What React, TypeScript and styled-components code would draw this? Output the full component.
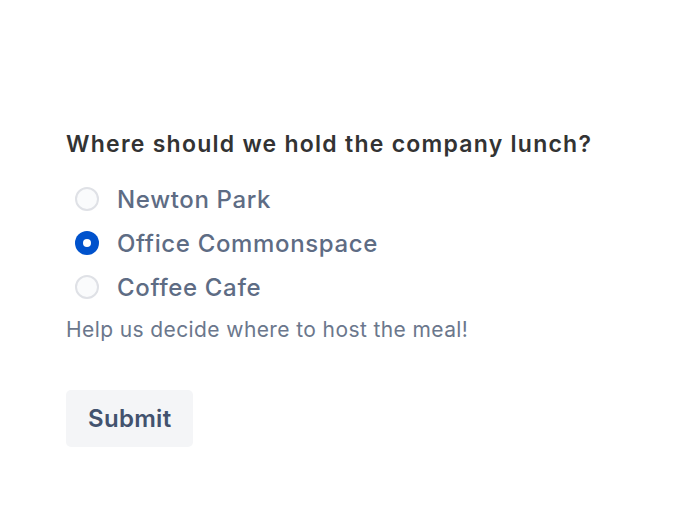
import React, { useState } from "react";
import styled, { createGlobalStyle } from "styled-components";

const GlobalStyle = createGlobalStyle`
  body {
    margin: 0;
    background: #ffffff;
    font-family: Inter, "Liberation Sans", Arial, sans-serif;
  }
`;

const Page = styled.div`
  padding: 128px 0 0 66px;
`;

const Form = styled.form`
  display: flex;
  flex-direction: column;
`;

const Legend = styled.div`
  font-size: 23px;
  font-weight: 600;
  letter-spacing: 1.25px;
  color: #333333;
  line-height: 32px;
  margin-bottom: 17px;
`;

const Options = styled.div`
  display: flex;
  flex-direction: column;
`;

const Option = styled.label`
  display: flex;
  align-items: center;
  gap: 18px;
  height: 44px;
  padding-left: 9px;
  cursor: pointer;
`;

const Radio = styled.span<{ $checked: boolean }>`
  width: 24px;
  height: 24px;
  box-sizing: border-box;
  border-radius: 50%;
  border: ${(p) => (p.$checked ? "none" : "2px solid #dfe1e6")};
  background: ${(p) => (p.$checked ? "#0052cc" : "#fafbfc")};
  display: flex;
  align-items: center;
  justify-content: center;
  &::after {
    content: "";
    display: ${(p) => (p.$checked ? "block" : "none")};
    width: 8px;
    height: 8px;
    border-radius: 50%;
    background: #ffffff;
  }
`;

const OptionText = styled.span`
  font-size: 24px;
  font-weight: 500;
  letter-spacing: 0.65px;
  color: #5e6c84;
`;

const Help = styled.div`
  font-size: 21px;
  letter-spacing: 0.4px;
  line-height: 24px;
  color: #6b778c;
  margin-top: 9px;
`;

const Button = styled.button`
  margin-top: 48px;
  align-self: flex-start;
  height: 57px;
  padding: 0 22px;
  border: none;
  border-radius: 5px;
  background: #f4f5f7;
  color: #42526e;
  font-family: inherit;
  font-size: 24px;
  font-weight: 600;
  letter-spacing: 0.3px;
`;

const choices = ["Newton Park", "Office Commonspace", "Coffee Cafe"];

export default function App() {
  const [value, setValue] = useState("Office Commonspace");
  return (
    <Page>
      <GlobalStyle />
      <Form onSubmit={(e) => e.preventDefault()}>
        <Legend>Where should we hold the company lunch?</Legend>
        <Options>
          {choices.map((c) => (
            <Option key={c} onClick={() => setValue(c)}>
              <Radio $checked={value === c} />
              <OptionText>{c}</OptionText>
            </Option>
          ))}
        </Options>
        <Help>Help us decide where to host the meal!</Help>
        <Button type="submit">Submit</Button>
      </Form>
    </Page>
  );
}
